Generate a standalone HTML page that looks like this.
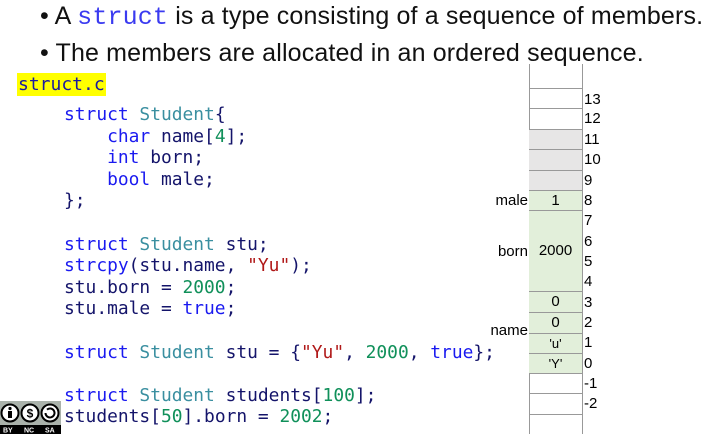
<!DOCTYPE html>
<html><head><meta charset="utf-8"><style>
body{margin:0;width:728px;height:434px;background:#fff;position:relative;overflow:hidden;font-family:"Liberation Sans",sans-serif}
.t{position:absolute;left:40px;font-size:25px;color:#111;white-space:nowrap;letter-spacing:0.15px}
.t .c{font-family:"Liberation Mono",monospace;color:#3a3af0;font-size:25px}
pre{margin:0;position:absolute;font-family:"DejaVu Sans Mono",monospace;font-size:17.9px;line-height:21.6px;color:#14146a}
.k{color:#1a1af0}.s{color:#3a8fa0}.n{color:#10905a}.r{color:#b01818}
.fn{position:absolute;left:17px;top:73px;background:#ffff00;font-family:"DejaVu Sans Mono",monospace;font-size:18px;color:#1a1aa0;padding:0 1px;line-height:23px}
.col{position:absolute;left:529px;width:52px;top:64px;height:370px;border-left:1px solid #999;border-right:1px solid #999}
.cell{position:absolute;left:529px;width:53px;box-sizing:border-box;border-top:1px solid #999;font-size:15px;text-align:center;color:#000}
.lb{position:absolute;left:584px;font-size:15px;color:#000}
.nm{position:absolute;font-size:15px;color:#000;right:200px}
</style></head><body>
<div class="t" style="top:2px">• A <span class="c">struct</span> is a type consisting of a sequence of members.</div>
<div class="t" style="top:39px">• The members are allocated in an ordered sequence.</div>
<div class="fn">struct.c</div>
<pre style="left:64px;top:104px"><span class="k">struct</span> <span class="s">Student</span>{
    <span class="k">char</span> name[<span class="n">4</span>];
    <span class="k">int</span> born;
    <span class="k">bool</span> male;
};

<span class="k">struct</span> <span class="s">Student</span> stu;
<span class="k">strcpy</span>(stu.name, <span class="r">"Yu"</span>);
stu.born = <span class="n">2000</span>;
stu.male = <span class="k">true</span>;

<span class="k">struct</span> <span class="s">Student</span> stu = {<span class="r">"Yu"</span>, <span class="n">2000</span>, <span class="k">true</span>};

<span class="k">struct</span> <span class="s">Student</span> students[<span class="n">100</span>];
students[<span class="n">50</span>].born = <span class="n">2002</span>;</pre>
<div class="col"></div>
<div class="cell" style="top:88px;height:20px"></div>
<div class="cell" style="top:108px;height:21px"></div>
<div class="cell" style="top:129px;height:20px;background:#e7e6e6"></div>
<div class="cell" style="top:149px;height:21px;background:#e7e6e6"></div>
<div class="cell" style="top:170px;height:20px;background:#e7e6e6"></div>
<div class="cell" style="top:190px;height:20px;background:#e2efda;line-height:19px">1</div>
<div class="cell" style="top:210px;height:81px;background:#e2efda;line-height:80px">2000</div>
<div class="cell" style="top:291px;height:21px;background:#e2efda;line-height:20px">0</div>
<div class="cell" style="top:312px;height:21px;background:#e2efda;line-height:20px">0</div>
<div class="cell" style="top:333px;height:20px;background:#e2efda;line-height:19px;font-size:13px">'u'</div>
<div class="cell" style="top:353px;height:20px;background:#e2efda;line-height:19px;font-size:13px">'Y'</div>
<div class="cell" style="top:373px;height:20px"></div>
<div class="cell" style="top:393px;height:21px"></div>
<div class="cell" style="top:414px;height:20px"></div>
<div class="nm" style="top:192px">male</div>
<div class="nm" style="top:243px">born</div>
<div class="nm" style="top:322px">name</div>
<div class="lb" style="top:91px">13</div><div class="lb" style="top:110px">12</div>
<div class="lb" style="top:131px">11</div><div class="lb" style="top:151px">10</div>
<div class="lb" style="top:172px">9</div><div class="lb" style="top:192px">8</div>
<div class="lb" style="top:212px">7</div><div class="lb" style="top:233px">6</div>
<div class="lb" style="top:253px">5</div><div class="lb" style="top:273px">4</div>
<div class="lb" style="top:294px">3</div><div class="lb" style="top:314px">2</div>
<div class="lb" style="top:334px">1</div><div class="lb" style="top:355px">0</div>
<div class="lb" style="top:375px">-1</div><div class="lb" style="top:395px">-2</div>
<svg style="position:absolute;left:0;top:401px" width="61" height="33" viewBox="0 0 61 33">
<rect x="0" y="0" width="61" height="33" fill="#aab2ab"/>
<rect x="0" y="24" width="61" height="9" fill="#000"/>
<g fill="#fff" stroke="#000" stroke-width="2"><circle cx="10" cy="12" r="8.5"/><circle cx="30" cy="12" r="8.5"/><circle cx="50" cy="12" r="8.5"/></g>
<circle cx="10" cy="7.5" r="1.6"/><rect x="8" y="10" width="4" height="7"/>
<text x="30" y="16.5" font-size="12" font-weight="bold" text-anchor="middle" font-family="Liberation Sans">$</text>
<path d="M45.5 12a4.5 4.5 0 1 0 1.5-3.4" fill="none" stroke="#000" stroke-width="2"/>
<text y="31.5" font-size="7" fill="#fff" font-family="Liberation Sans" font-weight="bold"><tspan x="3">BY</tspan><tspan x="24">NC</tspan><tspan x="45">SA</tspan></text>
</svg>
</body></html>
